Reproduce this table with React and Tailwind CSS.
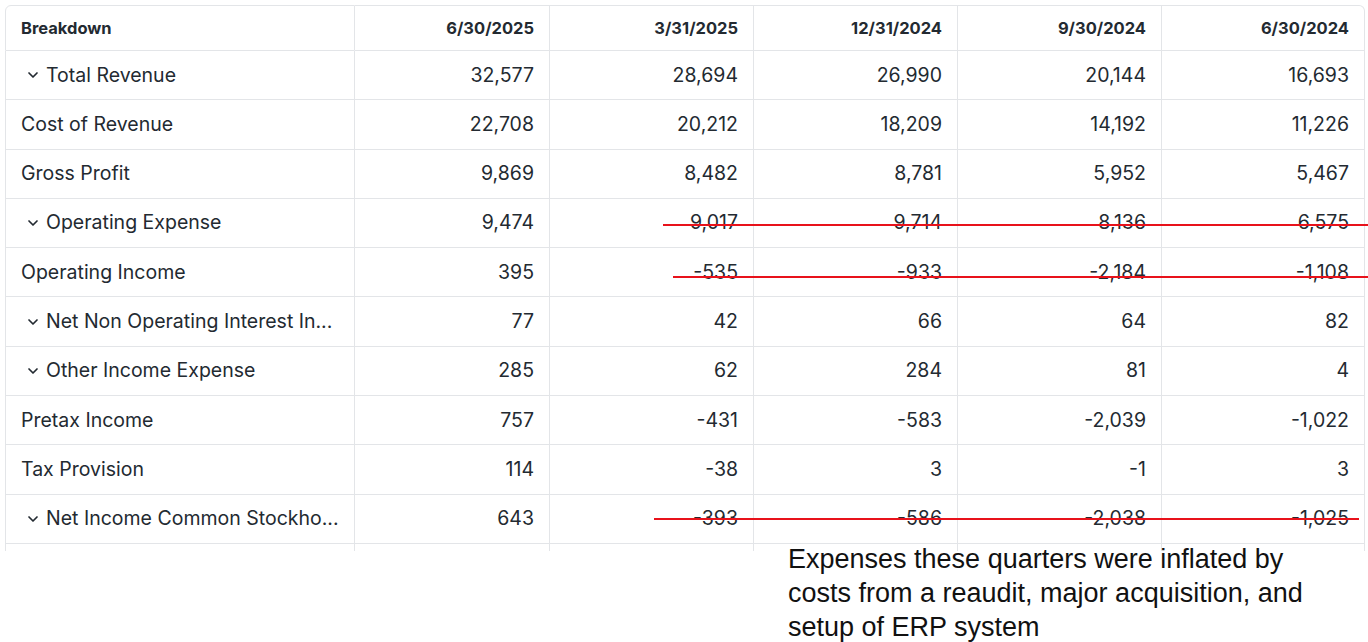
import React from "react";

const dates = ["6/30/2025", "3/31/2025", "12/31/2024", "9/30/2024", "6/30/2024"];

const rows = [
  { label: "Total Revenue", caret: true, values: ["32,577", "28,694", "26,990", "20,144", "16,693"] },
  { label: "Cost of Revenue", values: ["22,708", "20,212", "18,209", "14,192", "11,226"] },
  { label: "Gross Profit", values: ["9,869", "8,482", "8,781", "5,952", "5,467"] },
  { label: "Operating Expense", caret: true, values: ["9,474", "9,017", "9,714", "8,136", "6,575"] },
  { label: "Operating Income", values: ["395", "-535", "-933", "-2,184", "-1,108"] },
  { label: "Net Non Operating Interest In...", caret: true, values: ["77", "42", "66", "64", "82"] },
  { label: "Other Income Expense", caret: true, values: ["285", "62", "284", "81", "4"] },
  { label: "Pretax Income", values: ["757", "-431", "-583", "-2,039", "-1,022"] },
  { label: "Tax Provision", values: ["114", "-38", "3", "-1", "3"] },
  { label: "Net Income Common Stockho...", caret: true, values: ["643", "-393", "-586", "-2,038", "-1,025"] },
];

const Caret = () => (
  <svg width="12" height="12" viewBox="0 0 12 12" className="mr-[7px] shrink-0">
    <polyline points="2,4 6,8 10,4" fill="none" stroke="#232a31" strokeWidth="1.7" strokeLinecap="round" strokeLinejoin="round" />
  </svg>
);

export default function App() {
  return (
    <div className="relative w-[1368px] h-[642px] bg-white overflow-hidden" style={{ fontFamily: "Inter, 'Noto Sans', sans-serif" }}>
      <div className="pl-[5px] pt-[5px]">
        <div className="grid grid-cols-[350px_195px_204px_204px_204px_203px] w-[1360px] text-[#232a31]">
          {/* header */}
          <div className="h-[46px] flex items-center pl-[15px] border border-[#e3e5e8] rounded-tl-[6px] text-[16.5px] font-bold">
            Breakdown
          </div>
          {dates.map((d, i) => (
            <div
              key={d}
              className={`h-[46px] flex items-center justify-end pr-[15px] border-t border-b border-r border-[#e3e5e8] text-[16.5px] font-bold ${i === 4 ? "rounded-tr-[6px]" : ""}`}
            >
              {d}
            </div>
          ))}

          {/* rows */}
          {rows.map((r) => (
            <React.Fragment key={r.label}>
              <div
                className={`h-[49.3px] flex items-center border-l border-b border-r border-[#e3e5e8] text-[19.5px] whitespace-nowrap ${r.caret ? "pl-[21px]" : "pl-[15px]"}`}
              >
                {r.caret && <Caret />}
                {r.label}
              </div>
              {r.values.map((v, i) => (
                <div key={i} className="h-[49.3px] flex items-center justify-end pr-[15px] border-b border-r border-[#e3e5e8] text-[19.5px]">
                  {v}
                </div>
              ))}
            </React.Fragment>
          ))}

          {/* cut-off row */}
          <div className="h-[7px] border-l border-r border-[#e3e5e8]" />
          {dates.map((d) => (
            <div key={d} className="h-[7px] border-r border-[#e3e5e8]" />
          ))}
        </div>

        <p
          className="ml-[783px] -mt-[9px] text-[27px] leading-[34px] text-[#111] w-[530px]"
          style={{ fontFamily: "'Liberation Sans', Arial, sans-serif" }}
        >
          Expenses these quarters were inflated by costs from a reaudit, major acquisition, and setup of ERP system
        </p>
      </div>

      {/* hand-drawn strike lines */}
      <div className="absolute left-[663px] top-[224px] w-[705px] h-[1.5px] bg-[#e8121b]" />
      <div className="absolute left-[673px] top-[276px] w-[695px] h-[1.5px] bg-[#e8121b]" />
      <div className="absolute left-[654px] top-[518px] w-[705px] h-[1.5px] bg-[#e8121b]" />
    </div>
  );
}
